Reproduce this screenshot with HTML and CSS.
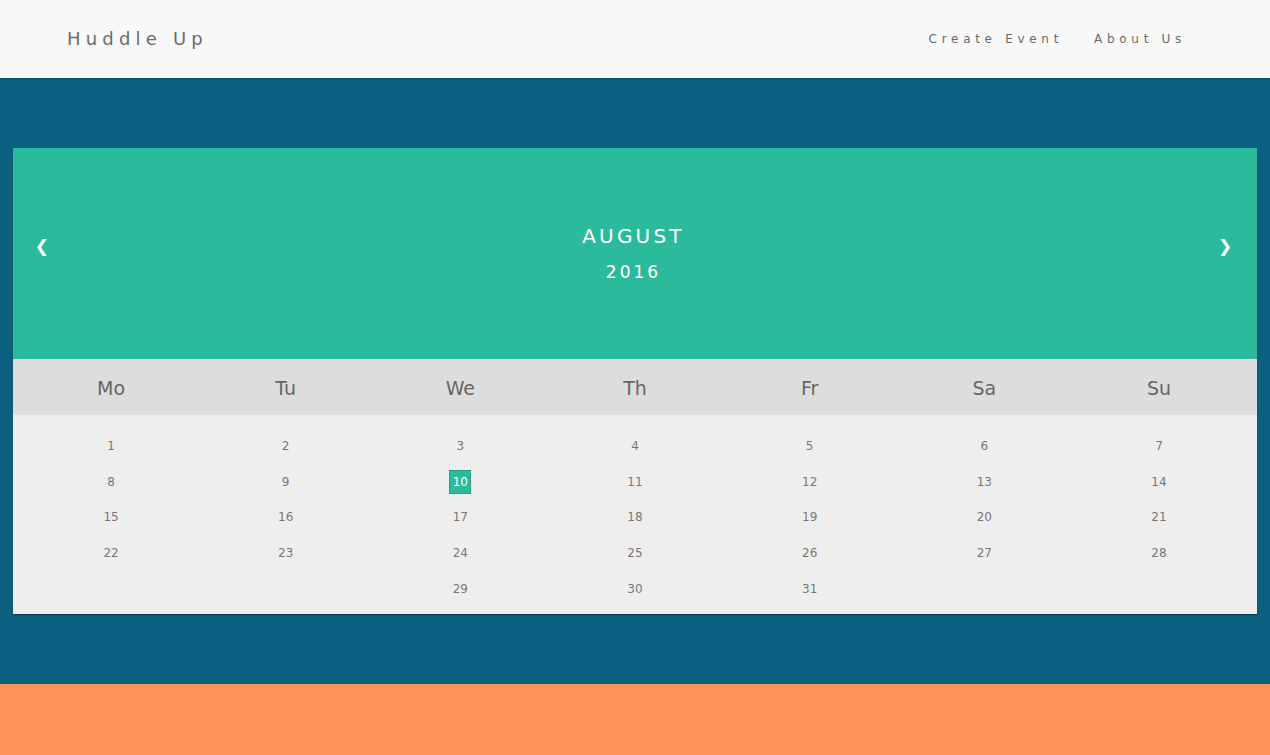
FILE: index.html
```html
<!DOCTYPE html>
<html lang="en">
<head>
<meta charset="utf-8">
<title>Huddle Up</title>
<link rel="stylesheet" href="styles.css">
</head>
<body>
<header class="topbar">
  <div class="logo">Huddle Up</div>
  <nav class="nav">
    <a class="nav-link" href="#">Create Event</a>
    <a class="nav-link" href="#">About Us</a>
  </nav>
</header>
<main class="stage">
  <section class="calendar">
    <div class="month">
      <span class="arrow">&#10094;</span>
      <div class="month-title">
        <div class="month-name">AUGUST</div>
        <div class="month-year">2016</div>
      </div>
      <span class="arrow">&#10095;</span>
    </div>
    <ul class="weekdays">
      <li>Mo</li><li>Tu</li><li>We</li><li>Th</li><li>Fr</li><li>Sa</li><li>Su</li>
    </ul>
    <ul class="days">
      <li>1</li><li>2</li><li>3</li><li>4</li><li>5</li><li>6</li><li>7</li>
      <li>8</li><li>9</li><li><span class="active">10</span></li><li>11</li><li>12</li><li>13</li><li>14</li>
      <li>15</li><li>16</li><li>17</li><li>18</li><li>19</li><li>20</li><li>21</li>
      <li>22</li><li>23</li><li>24</li><li>25</li><li>26</li><li>27</li><li>28</li>
      <li></li><li></li><li>29</li><li>30</li><li>31</li><li></li><li></li>
    </ul>
  </section>
</main>
<footer class="footer"></footer>
</body>
</html>
```

FILE: styles.css
```css
* { box-sizing: border-box; }
html, body { margin: 0; padding: 0; }
body {
  font-family: "DejaVu Sans", "Noto Sans", sans-serif;
  background: #ff9256;
}
.topbar {
  height: 78px;
  background: #f8f8f8;
  box-shadow: 0 1px 2px rgba(0,0,0,0.18);
  display: flex;
  align-items: center;
  justify-content: space-between;
  padding: 0 84px 0 67px;
  position: relative;
  z-index: 1;
}
.logo {
  font-size: 18px;
  letter-spacing: 5.2px;
  color: #6b6b6b;
  margin-top: -1px;
}
.nav { display: flex; gap: 31px; }
.nav-link {
  font-size: 12px;
  letter-spacing: 4.7px;
  color: #6b6b6b;
  text-decoration: none;
}
.stage {
  background: #0c607f;
  padding: 70px 0;
}
.calendar {
  width: 98%;
  margin: 0 auto;
  box-shadow: 0 1px 1px rgba(0,0,0,0.35);
}
.month {
  height: 211px;
  background: #2bbb9c;
  color: #fff;
  display: flex;
  align-items: center;
  justify-content: space-between;
  padding: 0 25px 0 22px;
}
.arrow {
  font-size: 17px;
  font-weight: bold;
  margin-bottom: 16px;
}
.month-title {
  text-align: center;
}
.month-name {
  font-size: 20px;
  letter-spacing: 3.2px;
  line-height: 30px;
}
.month-year {
  font-size: 17px;
  letter-spacing: 3px;
  line-height: 30px;
  margin-top: 6px;
}
.weekdays, .days {
  list-style: none;
  margin: 0;
  padding: 0 11px;
  display: grid;
  grid-template-columns: repeat(7, 1fr);
}
.weekdays {
  height: 56px;
  background: #ddd;
  align-items: center;
}
.weekdays li {
  text-align: center;
  font-size: 19px;
  color: #666;
  padding-top: 1px;
}
.days {
  background: #eee;
  padding-top: 13px;
  padding-bottom: 8px;
  grid-auto-rows: 35.7px;
}
.days li {
  text-align: center;
  font-size: 12px;
  color: #777;
  line-height: 36px;
}
.days .active {
  display: inline-block;
  background: #2bbb9c;
  color: #fff;
  width: 22px;
  height: 24px;
  line-height: 22px;
  border: 1px solid #1fa486;
}
.footer {
  height: 71px;
  background: #ff9256;
}
```
